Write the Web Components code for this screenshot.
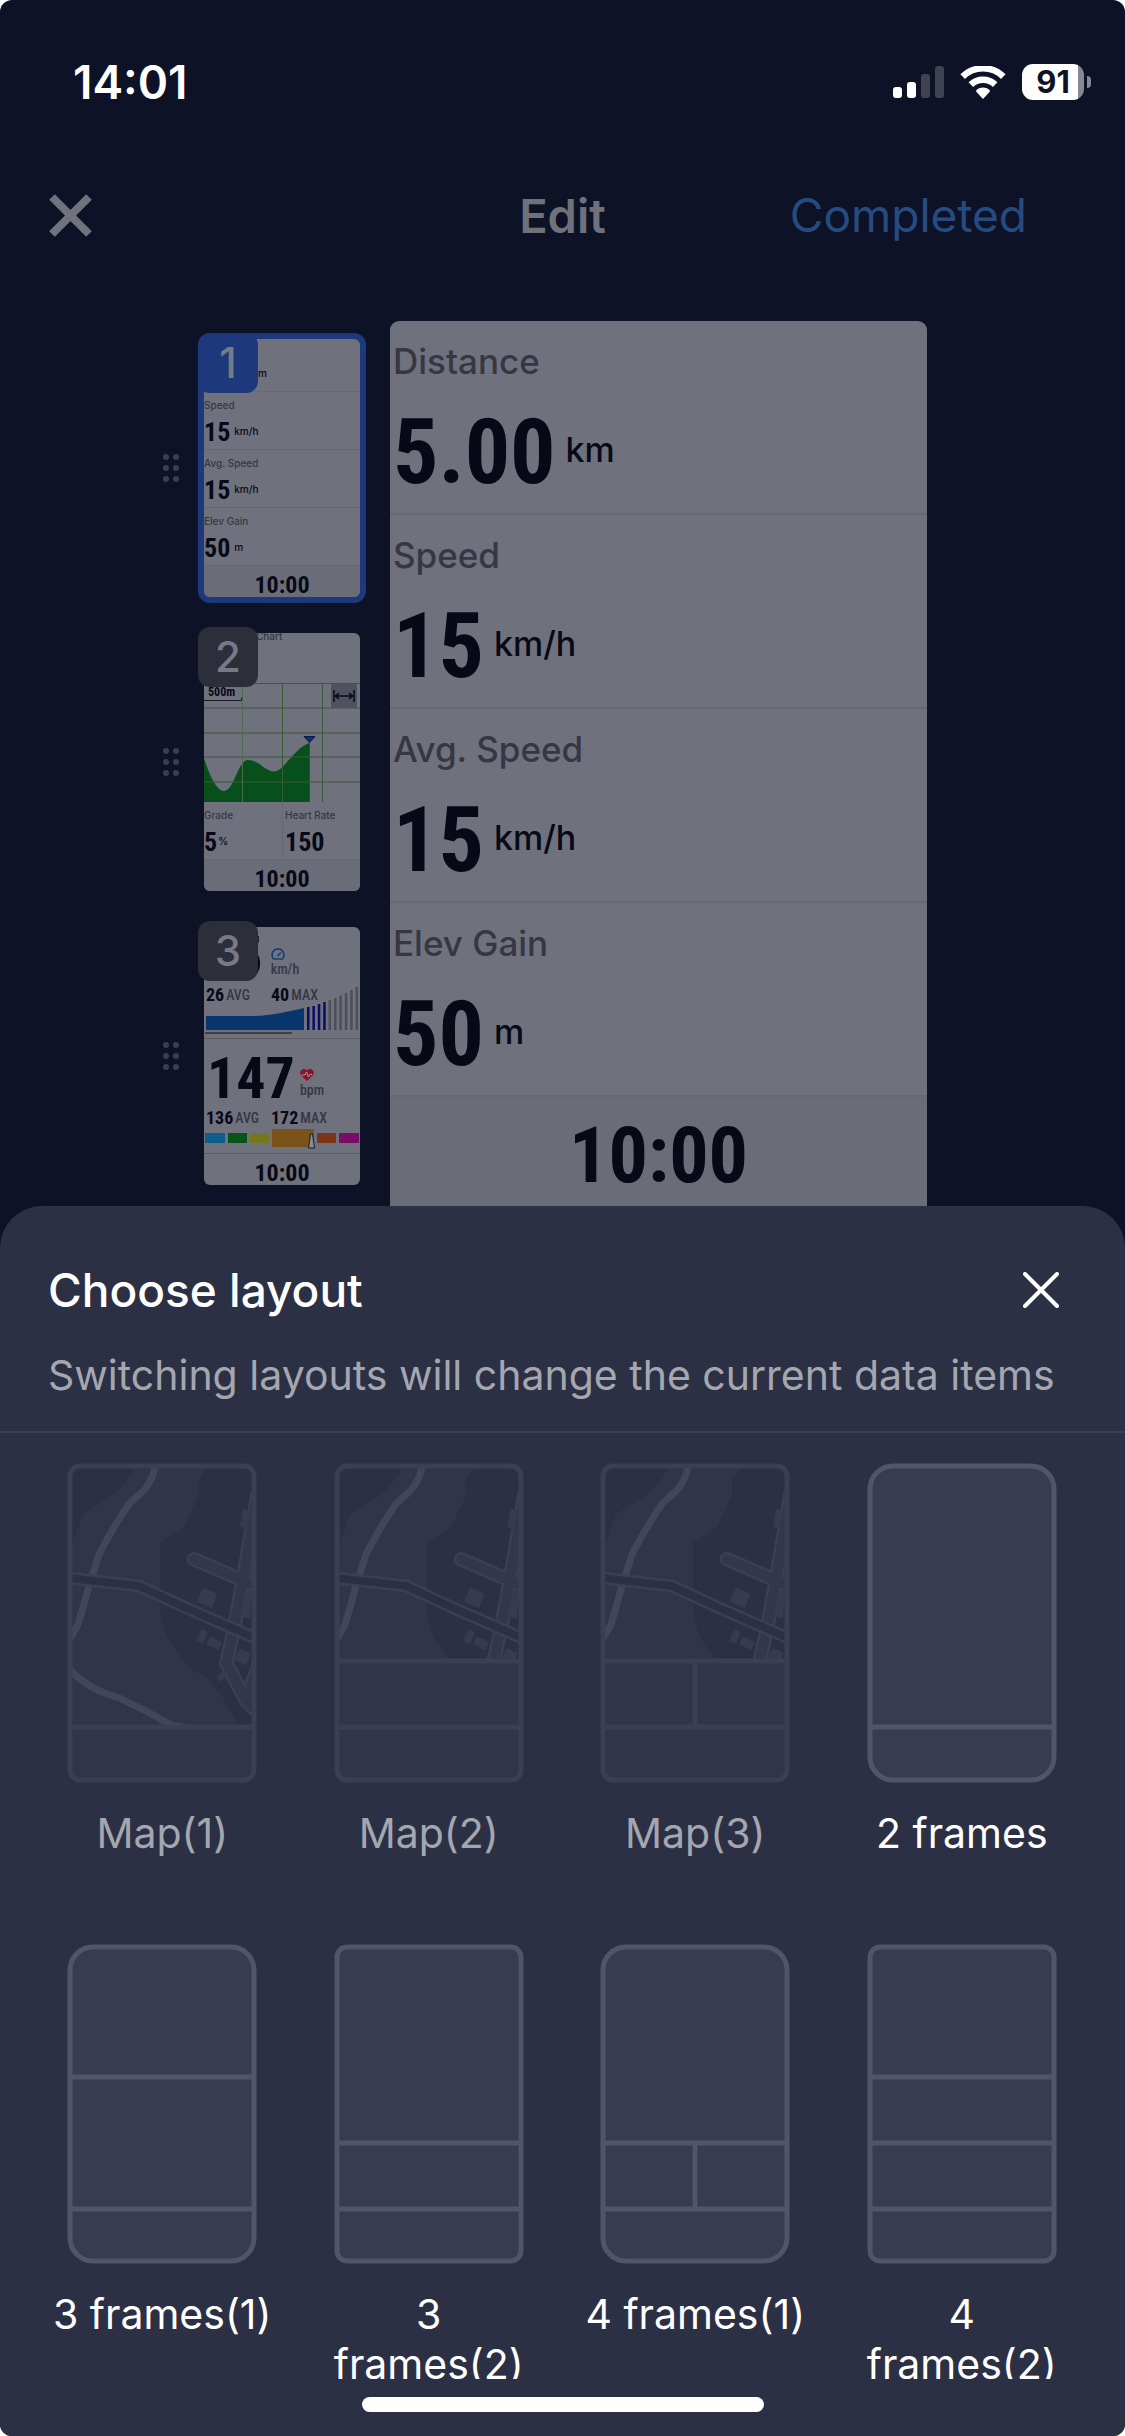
<!DOCTYPE html>
<html lang="en">
<head>
<meta charset="utf-8">
<meta name="viewport" content="width=device-width, initial-scale=1">
<title>Edit</title>
<style>
  :root {
    --font-ui: Inter, "Liberation Sans", sans-serif;
    --font-num: "Liberation Sans Narrow", "Roboto Condensed", "Open Sans Condensed", "DejaVu Sans Condensed", sans-serif;
    --bg: #0d1226;
    --sheet: #2c3045;
    --paper: #6f717d;
    --paper-alt: #6a6c77;
    --rule: #666873;
    --ink: #070a16;
    --ink-muted: #353843;
  }
  body {
    margin: 0;
    background: #fff;
    font-family: var(--font-ui);
  }
</style>
</head>
<body>
<edit-app>
  <status-bar slot="top" time="14:01" battery="91"></status-bar>
  <nav-header slot="top" heading="Edit" action="Completed"></nav-header>

  <page-thumb slot="pages" number="1" selected>
    <data-screen compact clock="10:00">
      <data-field unit="m" covered></data-field>
      <data-field label="Speed" value="15" unit="km/h"></data-field>
      <data-field label="Avg. Speed" value="15" unit="km/h"></data-field>
      <data-field label="Elev Gain" value="50" unit="m"></data-field>
    </data-screen>
  </page-thumb>
  <page-thumb slot="pages" number="2">
    <data-screen compact clock="10:00">
      <elevation-chart></elevation-chart>
      <field-pair>
        <data-field label="Grade" value="5" unit="%" tight></data-field>
        <data-field label="Heart Rate" value="150" divided></data-field>
      </field-pair>
    </data-screen>
  </page-thumb>
  <page-thumb slot="pages" number="3">
    <data-screen compact plain clock="10:00">
      <meter-panel value="25" unit="km/h" avg="26" max="40" kind="speed"></meter-panel>
      <meter-panel value="147" unit="bpm" avg="136" max="172" kind="heart"></meter-panel>
    </data-screen>
  </page-thumb>

  <data-screen slot="preview" clock="10:00">
    <data-field label="Distance" value="5.00" unit="km"></data-field>
    <data-field label="Speed" value="15" unit="km/h"></data-field>
    <data-field label="Avg. Speed" value="15" unit="km/h"></data-field>
    <data-field label="Elev Gain" value="50" unit="m"></data-field>
  </data-screen>

  <layout-sheet slot="sheet" heading="Choose layout" note="Switching layouts will change the current data items">
    <layout-option name="Map(1)" lines="263" map disabled></layout-option>
    <layout-option name="Map(2)" lines="197 263" map disabled></layout-option>
    <layout-option name="Map(3)" lines="197 263" split map disabled></layout-option>
    <layout-option name="2 frames" lines="263" round></layout-option>
    <layout-option name="3 frames(1)" lines="132 264" round></layout-option>
    <layout-option name="3 frames(2)" lines="198 264"></layout-option>
    <layout-option name="4 frames(1)" lines="198 264" split round></layout-option>
    <layout-option name="4 frames(2)" lines="132 198 264"></layout-option>
  </layout-sheet>
</edit-app>

<script>
(function () {
  // Base class: fills an open shadow root from the subclass's render().
  class BaseElement extends HTMLElement {
    connectedCallback() {
      if (this.shadowRoot) return;
      const template = document.createElement('template');
      template.innerHTML = this.render();
      this.attachShadow({ mode: 'open' });
      this.shadowRoot.appendChild(template.content.cloneNode(true));
    }

    attr(name) {
      return this.getAttribute(name) || '';
    }
  }

  customElements.define('edit-app', class EditApp extends BaseElement {
    render() {
      return `
        <style>
          :host {
            display: flex;
            flex-direction: column;
            height: 100vh;
            overflow: hidden;
            border-radius: 12px;
            background: var(--bg);
          }
          .editor {
            display: flex;
            justify-content: center;
            gap: 24px;
            height: 908px;
            padding-right: 54px;
            overflow: hidden;
          }
          .pages {
            display: flex;
            flex-direction: column;
            gap: 24px;
            padding-top: 35px;
          }
          .preview {
            width: 537px;
            padding-top: 23px;
          }
          .sheet {
            flex: 1;
            min-height: 0;
          }
        </style>
        <slot name="top"></slot>
        <main class="editor">
          <div class="pages"><slot name="pages"></slot></div>
          <div class="preview"><slot name="preview"></slot></div>
        </main>
        <div class="sheet"><slot name="sheet"></slot></div>
      `;
    }
  });

  customElements.define('status-bar', class StatusBar extends BaseElement {
    render() {
      return `
        <style>
          :host {
            display: flex;
            align-items: center;
            justify-content: space-between;
            box-sizing: border-box;
            height: 132px;
            padding: 32px 34px 0 73px;
            color: #fff;
          }
          .time {
            font-size: 46px;
            font-weight: 600;
          }
          .icons {
            display: flex;
            align-items: center;
            gap: 16px;
          }
          svg { display: block; }
          .battery {
            display: flex;
            align-items: center;
            gap: 3px;
          }
          .cell {
            width: 62px;
            height: 36px;
            border-radius: 11px;
            background: linear-gradient(90deg, #fff 90%, #868892 90%);
            color: var(--bg);
            font-size: 31px;
            font-weight: 700;
            line-height: 36px;
            text-align: center;
          }
          .nub {
            width: 4px;
            height: 12px;
            border-radius: 0 4px 4px 0;
            background: #868892;
          }
        </style>
        <span class="time">${this.attr('time')}</span>
        <div class="icons">
          <svg width="51" height="32" viewBox="0 0 51 32" fill="#fff" aria-hidden="true">
            <rect x="0" y="21" width="9" height="11" rx="3"/>
            <rect x="14" y="16" width="9" height="16" rx="3"/>
            <g fill="#3f4252">
              <rect x="28" y="8" width="9" height="24" rx="3"/>
              <rect x="42" y="0" width="9" height="32" rx="3"/>
            </g>
          </svg>
          <svg width="46" height="33" viewBox="0 0 46 33" aria-hidden="true">
            <path d="M23 33l-6.500-7q-1-1.200.200-2.200a10 10 0 0 1 12.600 0q1.200 1 .2 2.200z" fill="#fff"/>
            <path d="M10.800 18.700a17.500 17.500 0 0 1 24.400 0" fill="none" stroke="#fff" stroke-width="6.500"/>
            <path d="M2.700 10.600a29 29 0 0 1 40.600 0" fill="none" stroke="#fff" stroke-width="6.500"/>
          </svg>
          <div class="battery"><span class="cell">${this.attr('battery')}</span><span class="nub"></span></div>
        </div>
      `;
    }
  });

  customElements.define('nav-header', class NavHeader extends BaseElement {
    render() {
      return `
        <style>
          :host {
            display: grid;
            grid-template-columns: 1fr auto 1fr;
            align-items: center;
            box-sizing: border-box;
            height: 166px;
            padding: 0 49px;
          }
          h1 {
            margin: 0;
            font-size: 47px;
            font-weight: 600;
            color: #6f717b;
          }
          button {
            padding: 0;
            border: 0;
            background: none;
            font: inherit;
            cursor: pointer;
          }
          .close { justify-self: start; }
          .done {
            justify-self: end;
            margin-right: 49px;
            font-size: 46px;
            color: #264b80;
          }
          svg { display: block; }
        </style>
        <button class="close" type="button" aria-label="Close">
          <svg width="43" height="43" viewBox="0 0 43 43">
            <path d="M3 3l37 37M40 3L3 40" stroke="#70727c" stroke-width="8"/>
          </svg>
        </button>
        <h1>${this.attr('heading')}</h1>
        <button class="done" type="button">${this.attr('action')}</button>
      `;
    }
  });

  customElements.define('page-thumb', class PageThumb extends BaseElement {
    render() {
      return `
        <style>
          :host {
            display: flex;
            --accent: transparent;
            --badge: #2c2e3a;
          }
          :host([selected]) {
            --accent: #1d397c;
            --badge: #1d397c;
          }
          button {
            display: block;
            padding: 0;
            border: 0;
            background: none;
            font: inherit;
            color: inherit;
            text-align: left;
            cursor: pointer;
          }
          .handle {
            display: grid;
            place-items: center;
            width: 54px;
          }
          .page {
            position: relative;
            box-sizing: border-box;
            width: 168px;
            height: 270px;
            padding: 6px;
            border-radius: 12px;
            background: var(--accent);
          }
          .badge {
            position: absolute;
            top: 0;
            left: 0;
            width: 60px;
            height: 60px;
            border-radius: 12px;
            background: var(--badge);
            color: #777986;
            font-size: 42px;
            font-weight: 500;
            line-height: 60px;
            text-align: center;
          }
        </style>
        <button class="handle" type="button" aria-label="Move page ${this.attr('number')}">
          <svg width="18" height="28" viewBox="0 0 18 28" fill="#3b3e4d">
            <circle cx="4" cy="3" r="3"/><circle cx="14" cy="3" r="3"/>
            <circle cx="4" cy="14" r="3"/><circle cx="14" cy="14" r="3"/>
            <circle cx="4" cy="25" r="3"/><circle cx="14" cy="25" r="3"/>
          </svg>
        </button>
        <button class="page" type="button">
          <slot></slot>
          <span class="badge">${this.attr('number')}</span>
        </button>
      `;
    }
  });

  customElements.define('data-screen', class DataScreen extends BaseElement {
    render() {
      return `
        <style>
          :host {
            display: flex;
            flex-direction: column;
            box-sizing: border-box;
            height: 100%;
            border-radius: 9px 9px 0 0;
            background: var(--paper);
            color: var(--ink);
            overflow: hidden;
            --row: 194px;
            --clock-height: 110px;
            --clock-top: 20px;
            --clock-size: 78px;
            --line: 2px;
            --inset: 3px;
            --top: 16px;
            --label-size: 35px;
            --label-height: 48px;
            --label-gap: 23px;
            --value-size: 90px;
            --unit-size: 34px;
            --unit-gap: 10px;
            --unit-rise: 6px;
          }
          :host([compact]) {
            justify-content: flex-end;
            border-radius: 6px;
            --row: 58px;
            --clock-height: 31px;
            --clock-top: 7px;
            --clock-size: 24px;
            --line: 1px;
            --inset: 0px;
            --top: 6px;
            --label-size: 10px;
            --label-height: 14px;
            --label-gap: 7px;
            --value-size: 26px;
            --unit-size: 10px;
            --unit-gap: 4px;
            --unit-rise: 2px;
          }
          .clock {
            flex: none;
            box-sizing: border-box;
            height: var(--clock-height);
            padding-top: var(--clock-top);
            background: var(--paper-alt);
            font-family: var(--font-num);
            font-size: var(--clock-size);
            font-weight: 700;
            line-height: 1;
            text-align: center;
          }
          :host([plain]) .clock { background: none; }
        </style>
        <slot></slot>
        <div class="clock">${this.attr('clock')}</div>
      `;
    }
  });

  customElements.define('data-field', class DataField extends BaseElement {
    render() {
      return `
        <style>
          :host {
            display: block;
            flex: none;
            box-sizing: border-box;
            height: var(--row);
            padding: var(--top) 0 0 var(--inset);
            border-bottom: var(--line) solid var(--rule);
            font-weight: 500;
            white-space: nowrap;
          }
          :host([divided]) {
            border-left: 1px solid var(--rule);
            padding-left: 2px;
          }
          /* Only the unit shows past the page number. */
          :host([covered]) { padding-left: 50px; }
          .label {
            height: var(--label-height);
            margin-bottom: var(--label-gap);
            font-size: var(--label-size);
            line-height: var(--label-height);
            color: var(--ink-muted);
          }
          .reading {
            display: flex;
            align-items: center;
            gap: var(--unit-gap);
            height: var(--value-size);
          }
          :host([tight]) .reading { gap: 1px; }
          .value {
            font-family: var(--font-num);
            font-size: var(--value-size);
            font-weight: 700;
            line-height: 1;
          }
          .unit {
            padding-bottom: var(--unit-rise);
            font-size: var(--unit-size);
            line-height: 1;
          }
        </style>
        <div class="label">${this.attr('label')}</div>
        <div class="reading">
          <span class="value">${this.attr('value')}</span>
          <span class="unit">${this.attr('unit')}</span>
        </div>
      `;
    }
  });

  customElements.define('field-pair', class FieldPair extends BaseElement {
    render() {
      return `
        <style>
          :host {
            display: grid;
            grid-template-columns: 1fr 1fr;
            flex: none;
          }
        </style>
        <slot></slot>
      `;
    }
  });

  customElements.define('elevation-chart', class ElevationChart extends BaseElement {
    render() {
      return `
        <style>
          :host {
            display: flex;
            flex-direction: column;
            flex: 1;
            min-height: 0;
            justify-content: flex-end;
          }
          .title {
            padding-left: 52px;
            margin-bottom: 39px;
            font-size: 10px;
            font-weight: 500;
            line-height: 14px;
            color: var(--ink-muted);
          }
          svg { display: block; flex: none; }
          text {
            font-family: var(--font-num);
            font-size: 12px;
            font-weight: 700;
          }
        </style>
        <div class="title">Chart</div>
        <svg width="156" height="120" viewBox="0 0 156 120">
          <path d="M0 76.500C6 95 13 109 20 109c10 0 14-31 24-31 11 0 17 11.500 26 11.500C80 89.500 90 66 105.500 61v59H0z" fill="#07501b"/>
          <path d="M0 1.500h156M0 26h156M0 51h156M0 75h156M0 100h156M78.500 1v119M118.500 1v119" stroke="#385c36" fill="none"/>
          <path d="M38.500 1v119" stroke="#4f6a4c"/>
          <path d="M105.500 60v60" stroke="#3d4352"/>
          <path d="M100 54.500h11l-5.500 6z" fill="#0c2d83" stroke="#0a1a48"/>
          <text x="4" y="14" fill="#070a16">500m</text>
          <path d="M0 18.500h37.500v-3" stroke="#171a26" fill="none"/>
          <rect x="127" y="2" width="26" height="24" rx="2" fill="#50525f"/>
          <path d="M130 8v12M150 8v12M131 14h18M135 11l-3.500 3 3.500 3M145 11l3.500 3-3.500 3" stroke="#070a16" stroke-width="1.500" fill="none"/>
        </svg>
      `;
    }
  });

  customElements.define('meter-panel', class MeterPanel extends BaseElement {
    icon() {
      if (this.attr('kind') === 'speed') {
        return `<svg width="14" height="12" viewBox="0 0 14 12" fill="none" stroke="#123f78" stroke-width="1.600">
          <path d="M2.600 11A6 6 0 1 1 11.400 11z"/><path d="M6.500 8L10 4.500"/></svg>`;
      }
      return `<svg width="14" height="12" viewBox="0 0 14 12">
        <path d="M7 12L1 6C-2 2 4-2.500 7 1.500 10-2.500 16 2 13 6z" fill="#8e1226"/>
        <path d="M2 6h3l1.500-3 2 5 1.500-2.500h2" fill="none" stroke="#a0a2ab"/></svg>`;
    }

    graph() {
      if (this.attr('kind') === 'speed') {
        const tops = [20, 19, 17, 15, 13, 11, 8.500, 6, 3, 0];
        const bars = tops.map((top, i) =>
          `<rect x="${103 + i * 5.400}" y="${top}" width="2.500" height="${43 - top}" fill="${i < 4 ? '#0c0d62' : '#4c4e59'}"/>`
        ).join('');
        return `<svg width="156" height="52" viewBox="0 0 156 52">
          <path d="M2 43V29h45c20 0 35-4 53-8v22z" fill="#08356b"/>${bars}
          <rect x="1" y="45" width="87" height="2" fill="#3d4048"/>
          <path d="M0 51.500h156" stroke="#5a5c68"/></svg>`;
      }
      return `<svg width="156" height="26" viewBox="0 0 156 26">
        <rect x="1" y="5" width="20" height="10" fill="#0b608a"/>
        <rect x="24" y="5" width="19" height="10" fill="#075417"/>
        <rect x="46" y="5" width="19" height="10" fill="#75761d"/>
        <rect x="68" y="1" width="42" height="18" fill="#7b5218"/>
        <rect x="113" y="5" width="19" height="10" fill="#7c3518"/>
        <rect x="135" y="5" width="20" height="10" fill="#780c66"/>
        <path d="M104.500 20l2-14h2l2 14z" fill="#8a8c94" stroke="#171a26"/>
        <path d="M0 25.500h156" stroke="#5a5c68"/></svg>`;
    }

    render() {
      return `
        <style>
          :host {
            display: block;
            flex: none;
            height: 116px;
            color: var(--ink);
            font-family: var(--font-num);
          }
          :host([kind="speed"]) { height: 111px; }
          .top {
            display: flex;
            gap: 5px;
            height: 60px;
            padding-left: 3px;
          }
          .value {
            font-size: 58px;
            font-weight: 700;
            line-height: 60px;
          }
          :host([kind="heart"]) .top { padding-top: 10px; }
          :host([kind="speed"]) .top {
            gap: 8px;
            padding-left: 0;
          }
          .side {
            display: flex;
            flex-direction: column;
            gap: 2px;
            padding-top: 21px;
            font-size: 14px;
            font-weight: 500;
            line-height: 14px;
            color: var(--ink-muted);
          }
          .stats {
            display: grid;
            grid-template-columns: 65px 1fr;
            height: 20px;
            padding-left: 2px;
          }
          .stats span {
            display: flex;
            align-items: center;
            gap: 2px;
            font-size: 14px;
            font-weight: 500;
            color: var(--ink-muted);
          }
          b {
            font-size: 18px;
            line-height: 16px;
            color: var(--ink);
          }
          svg { display: block; }
          :host([kind="speed"]) .stats { height: 0; }
          :host([kind="speed"]) .stats span { height: 16px; }
        </style>
        <div class="top">
          <span class="value">${this.attr('value')}</span>
          <div class="side">${this.icon()}<span>${this.attr('unit')}</span></div>
        </div>
        <div class="stats">
          <span><b>${this.attr('avg')}</b>AVG</span>
          <span><b>${this.attr('max')}</b>MAX</span>
        </div>
        ${this.graph()}
      `;
    }
  });

  customElements.define('layout-sheet', class LayoutSheet extends BaseElement {
    render() {
      return `
        <style>
          :host {
            display: flex;
            flex-direction: column;
            height: 100%;
            border-radius: 42px 42px 0 0;
            background: var(--sheet);
            color: #fff;
            overflow: hidden;
          }
          header {
            display: grid;
            grid-template-columns: 1fr auto;
            align-items: center;
            row-gap: 27px;
            padding: 54px 66px 28px 48px;
            border-bottom: 2px solid #3c4055;
          }
          h2 {
            margin: 0;
            font-size: 46px;
            font-weight: 500;
            line-height: 60px;
          }
          p {
            grid-column: 1 / -1;
            margin: 0;
            font-size: 41px;
            line-height: 56px;
            color: #a5a7b0;
          }
          button {
            padding: 0;
            border: 0;
            background: none;
            cursor: pointer;
          }
          svg { display: block; }
          .list {
            display: grid;
            grid-template-columns: repeat(4, 1fr);
            grid-auto-rows: 481px;
            flex: 1;
            min-height: 0;
            padding: 31px 30px 0 29px;
            overflow-y: auto;
            scrollbar-width: none;
          }
          .home {
            display: flex;
            justify-content: center;
            flex: none;
            box-sizing: border-box;
            height: 57px;
            padding-top: 18px;
          }
          .home span {
            width: 402px;
            height: 15px;
            border-radius: 8px;
            background: #fff;
          }
        </style>
        <header>
          <h2>${this.attr('heading')}</h2>
          <button type="button" aria-label="Close">
            <svg width="36" height="36" viewBox="0 0 36 36">
              <path d="M2 2l32 32M34 2L2 34" stroke="#fff" stroke-width="4" stroke-linecap="round"/>
            </svg>
          </button>
          <p>${this.attr('note')}</p>
        </header>
        <div class="list"><slot></slot></div>
        <div class="home"><span></span></div>
      `;
    }
  });

  // Street map drawn at three times the tile size, scaled down in place.
  const MAP = `
    <g transform="scale(.33333) translate(-55 -71)">
      <path d="M55 71H262Q235 130 190 165L100 222 70 305H55z" fill="#2c3045"/>
      <path d="M482 71H619V862H570L528 785Q500 740 470 710L418 682 355 597Q336 555 330 505V308L402 262 448 165V117z" fill="#2c3045"/>
      <g fill="none" stroke="#42465a" stroke-width="21">
        <path d="M316 71Q314 112 283 150L240 188Q190 260 148 342L117 440Q104 490 85 553L55 605"/>
        <path d="M55 683Q100 730 150 752L215 776 300 818 365 855 430 866"/>
      </g>
      <g fill="none" stroke="#3b3f53" stroke-width="44" stroke-linecap="round">
        <path d="M433 357L640 446"/>
        <path d="M624 160L583 400 553 565 530 668 588 780 640 830M588 780L625 680"/>
      </g>
      <g fill="none" stroke="#33374b" stroke-width="29" stroke-linecap="round">
        <path d="M433 357L640 446"/>
        <path d="M624 160L583 400 553 565 530 668 588 780 640 830M588 780L625 680"/>
      </g>
      <g fill="none">
        <path d="M50 412L268 437 410 503 625 597" stroke="#3b3f53" stroke-width="38"/>
        <path d="M50 412L268 437 410 503 625 597" stroke="#2c3045" stroke-width="23"/>
      </g>
      <path d="M581 205l20 4-12 56-18-6zM460 441l43 19-16 43-46-18zM590 452l18 3-8 80-23-5zM456 567l19 9-16 35-20-9zM481 588l35 17-10 25-36-18zM570 624l33 13-13 39-37-16zM515 694l14 11-16 20-10-13z" fill="#373b4f"/>
    </g>`;

  customElements.define('layout-option', class LayoutOption extends BaseElement {
    frame() {
      const lines = this.attr('lines').split(' ').map(Number);
      const radius = this.hasAttribute('round') ? 23 : 10;
      const rules = lines.map((y) => `<path d="M4 ${y}H184"/>`).join('');
      const split = this.hasAttribute('split') ? `<path d="M94 ${lines[0]}V${lines[1]}"/>` : '';
      const map = this.hasAttribute('map')
        ? `<svg width="188" height="${lines[0]}" viewBox="0 0 188 ${lines[0]}">${MAP}</svg>`
        : '';
      return `
        <svg class="frame" width="188" height="318" viewBox="0 0 188 318" aria-hidden="true">
          <clipPath id="edge"><rect x="2" y="2" width="184" height="314" rx="${radius}"/></clipPath>
          <rect class="fill" x="2" y="2" width="184" height="314" rx="${radius}"/>
          <g clip-path="url(#edge)">${map}</g>
          <g class="line">
            <rect x="2" y="2" width="184" height="314" rx="${radius}"/>${rules}${split}
          </g>
        </svg>`;
    }

    render() {
      return `
        <style>
          :host {
            display: block;
            text-align: center;
            --fill: #393c50;
            --line: #525568;
            --text: #fff;
          }
          :host([disabled]) {
            --fill: #31354a;
            --line: #3b3f53;
            --text: #a5a7b0;
          }
          button {
            display: inline-flex;
            flex-direction: column;
            align-items: center;
            gap: 26px;
            width: 226px;
            padding: 0;
            border: 0;
            background: none;
            color: var(--text);
            font: inherit;
            font-size: 41px;
            line-height: 50px;
            cursor: pointer;
          }
          .frame {
            display: block;
            overflow: visible;
          }
          .fill { fill: var(--fill); }
          .line {
            fill: none;
            stroke: var(--line);
            stroke-width: 5px;
          }
        </style>
        <button type="button" ${this.hasAttribute('disabled') ? 'disabled' : ''}>
          ${this.frame()}
          <span>${this.attr('name')}</span>
        </button>
      `;
    }
  });
})();
</script>
</body>
</html>
